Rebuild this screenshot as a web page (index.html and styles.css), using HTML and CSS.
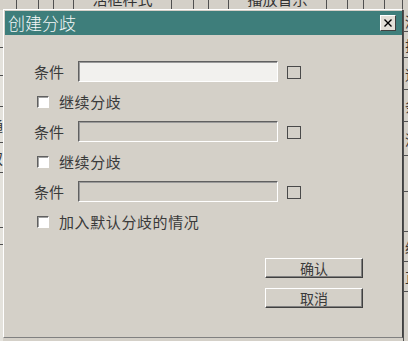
FILE: index.html
```html
<!DOCTYPE html>
<html lang="zh-CN">
<head>
<meta charset="utf-8">
<title>创建分歧</title>
<link rel="stylesheet" href="styles.css">
</head>
<body>
<div class="desk">
  <div class="app">
    <div class="hdr">
      <span class="hc w17"></span><span class="hc w22"></span><span class="hc w15"></span><span class="hc w20"></span>
      <span class="hc w98"><span class="ht">活框样式</span></span>
      <span class="hc w22"></span><span class="hc w15"></span><span class="hc w20"></span>
      <span class="hc w98"><span class="ht">播放音乐</span></span>
      <span class="hc w21"></span><span class="hc w16"></span><span class="hc w21"></span><span class="hc w18"></span>
    </div>
    <div class="side left">
      <span class="sr h38"></span><span class="sr h28"></span><span class="sr h31"></span><span class="sr h36"><i>通</i></span><span class="sr h30"><i>双</i></span><span class="sr h55"></span><span class="sr h17"></span><span class="sr hrest"></span>
    </div>
    <div class="mid"></div>
    <div class="side right">
      <span class="sr h22"><i>清</i></span><span class="sr h26"><i>排</i></span><span class="sr h32"><i>道</i></span><span class="sr h32"><i>条</i></span><span class="sr h34"><i>流</i></span><span class="sr h36"></span><span class="sr h40"></span><span class="sr h30"><i>续</i></span><span class="sr h30"><i>直</i></span><span class="sr hrest"></span>
    </div>
  </div>

  <div class="dialog">
    <div class="titlebar">
      <span class="title">创建分歧</span>
      <span class="close"><svg width="8" height="8" viewBox="0 0 8 8"><path d="M0.5 0.5 L7.5 7.5 M7.5 0.5 L0.5 7.5" stroke="#000" stroke-width="1.4" fill="none"/></svg></span>
    </div>
    <div class="body">
      <div class="fields">
        <div class="frow"><span class="lbl">条件</span><span class="inp"></span><span class="sq"></span></div>
        <div class="crow"><span class="cb"></span><span class="ctext">继续分歧</span></div>
        <div class="frow"><span class="lbl">条件</span><span class="inp off"></span><span class="sq"></span></div>
        <div class="crow"><span class="cb"></span><span class="ctext">继续分歧</span></div>
        <div class="frow"><span class="lbl">条件</span><span class="inp off"></span><span class="sq"></span></div>
        <div class="crow"><span class="cb"></span><span class="ctext">加入默认分歧的情况</span></div>
      </div>
      <div class="btns">
        <span class="btn">确认</span>
        <span class="btn">取消</span>
      </div>
    </div>
  </div>
</div>
</body>
</html>
```

FILE: styles.css
```css
* { box-sizing: border-box; }
html, body { margin: 0; padding: 0; }
body {
  width: 408px;
  height: 341px;
  overflow: hidden;
  background: #d4d0c8;
  font-family: "Noto Sans CJK SC", "Noto Sans", sans-serif;
  color: #2a2a2a;
}
.desk { position: relative; width: 408px; height: 341px; }

/* background application */
.app {
  display: grid;
  grid-template-columns: 3px 1fr 5px;
  grid-template-rows: 10px 1fr;
  width: 408px;
  height: 341px;
}
.hdr {
  grid-column: 1 / 4;
  display: flex;
  overflow: hidden;
  background: #d4d0c8;
}
.hc {
  flex: none;
  height: 10px;
  border-right: 1px solid #505050;
  display: flex;
  justify-content: center;
  overflow: hidden;
}
.w15 { width: 15px; } .w16 { width: 16px; } .w17 { width: 17px; } .w18 { width: 18px; }
.w20 { width: 20px; } .w21 { width: 21px; } .w22 { width: 22px; } .w98 { width: 98px; }
.ht {
  font-size: 15px;
  line-height: 15px;
  margin-top: -9px;
  color: #333;
  white-space: nowrap;
}
.side {
  display: flex;
  flex-direction: column;
  overflow: hidden;
}
.side.left { background: #e4e2dc; }
.side.right { border-left: 1px solid #505050; background: #d4d0c8; }
.sr {
  flex: none;
  border-bottom: 1px solid #505050;
  overflow: hidden;
  font-size: 14px;
  line-height: 14px;
  display: flex;
  align-items: center;
}
.sr i { font-style: normal; color: #333; }
.side.left .sr i { margin-left: -11px; }
.side.right .sr i { margin-left: 1px; }
.h17 { height: 17px; } .h22 { height: 22px; } .h26 { height: 26px; } .h28 { height: 28px; }
.h30 { height: 30px; } .h31 { height: 31px; } .h32 { height: 32px; } .h34 { height: 34px; }
.h36 { height: 36px; } .h38 { height: 38px; } .h40 { height: 40px; } .h55 { height: 55px; }
.hrest { flex: 1; border-bottom: none; }

/* dialog window */
.dialog {
  position: absolute;
  left: 3px;
  top: 9px;
  width: 400px;
  height: 329px;
  background: #d4d0c8;
  border-top: 1px solid #ffffff;
  border-left: 1px solid #ffffff;
  border-right: 1px solid #404040;
  border-bottom: 1px solid #808080;
  padding: 1px 0 0 1px;
  display: flex;
  flex-direction: column;
}
.titlebar {
  height: 24px;
  background: #3e7e7b;
  display: flex;
  align-items: center;
  justify-content: space-between;
  padding: 0 6px 0 3px;
}
.title {
  color: #f4f8f8;
  font-size: 17px;
  line-height: 20px;
  font-weight: 300;
}
.close {
  width: 16px;
  height: 16px;
  background: #e2dfd8;
  border-top: 1px solid #ffffff;
  border-left: 1px solid #ffffff;
  border-right: 1px solid #404040;
  border-bottom: 1px solid #404040;
  display: flex;
  align-items: center;
  justify-content: center;
}
.close svg { display: block; }

.body {
  flex: 1;
  display: flex;
  flex-direction: column;
  padding: 26px 0 0 29px;
}
.fields { display: flex; flex-direction: column; }
.frow {
  height: 21px;
  display: flex;
  align-items: center;
}
.lbl {
  width: 44px;
  font-size: 15px;
  line-height: 15px;
  color: #3a3a3a;
}
.inp {
  width: 200px;
  height: 21px;
  background: #f2f1ee;
  border-top: 1px solid #606060;
  border-left: 1px solid #606060;
  border-right: 1px solid #ffffff;
  border-bottom: 1px solid #ffffff;
  box-shadow: inset 1px 1px 0 #9a9a9a;
}
.inp.off { background: #d4d0c8; }
.sq {
  width: 14px;
  height: 13px;
  margin-left: 9px;
  margin-top: 2px;
  border: 1px solid #4a4a4a;
}
.crow {
  height: 39px;
  display: flex;
  align-items: center;
  padding-left: 3px;
}
.cb {
  width: 12px;
  height: 12px;
  background: #ffffff;
  border-top: 1px solid #606060;
  border-left: 1px solid #606060;
  border-right: 1px solid #ffffff;
  border-bottom: 1px solid #ffffff;
  box-shadow: inset 1px 1px 0 #a0a0a0;
}
.ctext {
  margin-left: 10px;
  font-size: 15px;
  line-height: 15px;
  color: #3a3a3a;
  letter-spacing: 0.6px;
}
.btns {
  align-self: flex-end;
  margin-right: 39px;
  margin-top: 17px;
  display: flex;
  flex-direction: column;
  gap: 10px;
}
.btn {
  width: 98px;
  height: 20px;
  display: flex;
  align-items: center;
  justify-content: center;
  font-size: 14px;
  color: #3a3a3a;
  background: #d4d0c8;
  border-top: 1px solid #ffffff;
  border-left: 1px solid #ffffff;
  border-right: 1px solid #404040;
  border-bottom: 1px solid #404040;
  box-shadow: inset -1px -1px 0 #808080;
}
```
